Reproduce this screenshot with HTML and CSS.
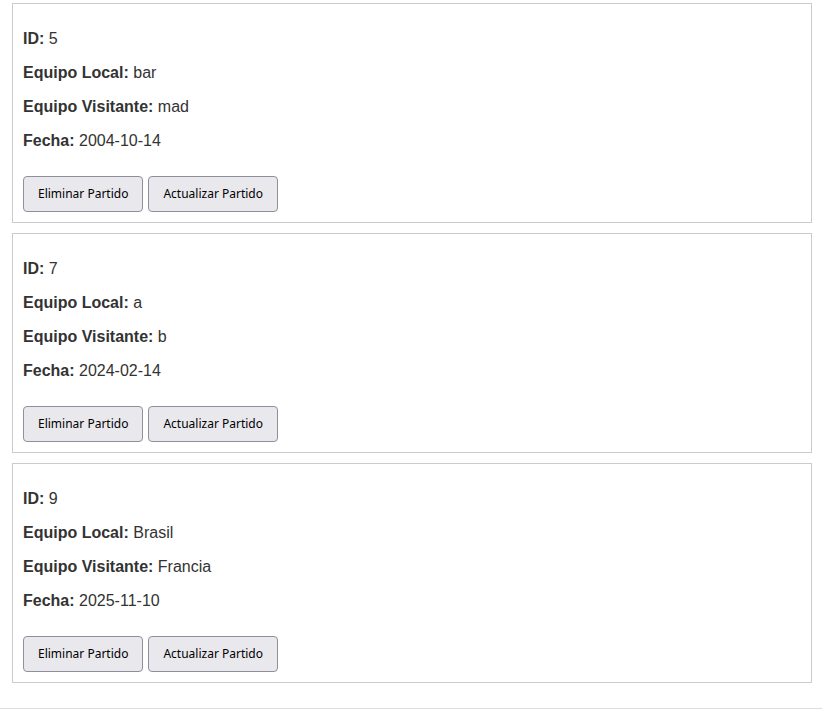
FILE: index.html
```html
<!DOCTYPE html>
<html lang="es">
<head>
<meta charset="utf-8">
<title>Partidos</title>
<link rel="stylesheet" href="styles.css">
</head>
<body>
<main class="list">
  <section class="card">
    <p><strong>ID:</strong> 5</p>
    <p><strong>Equipo Local:</strong> bar</p>
    <p><strong>Equipo Visitante:</strong> mad</p>
    <p><strong>Fecha:</strong> 2004-10-14</p>
    <div class="actions">
      <button class="btn">Eliminar Partido</button>
      <button class="btn">Actualizar Partido</button>
    </div>
  </section>
  <section class="card">
    <p><strong>ID:</strong> 7</p>
    <p><strong>Equipo Local:</strong> a</p>
    <p><strong>Equipo Visitante:</strong> b</p>
    <p><strong>Fecha:</strong> 2024-02-14</p>
    <div class="actions">
      <button class="btn">Eliminar Partido</button>
      <button class="btn">Actualizar Partido</button>
    </div>
  </section>
  <section class="card">
    <p><strong>ID:</strong> 9</p>
    <p><strong>Equipo Local:</strong> Brasil</p>
    <p><strong>Equipo Visitante:</strong> Francia</p>
    <p><strong>Fecha:</strong> 2025-11-10</p>
    <div class="actions">
      <button class="btn">Eliminar Partido</button>
      <button class="btn">Actualizar Partido</button>
    </div>
  </section>
</main>
<footer class="footer"></footer>
</body>
</html>
```
FILE: styles.css
```css
html, body {
  margin: 0;
  padding: 0;
  background: #ffffff;
}
body {
  font-family: "Liberation Sans", Arial, sans-serif;
  font-size: 16px;
  color: #333333;
}
.list {
  padding: 3px 10px 0 12px;
  display: flex;
  flex-direction: column;
  gap: 10px;
}
.card {
  border: 1px solid #cccccc;
  padding: 10px;
}
.card p {
  margin: 16px 0;
  line-height: 18px;
}
.actions {
  display: flex;
  gap: 5px;
  padding-top: 10px;
}
.btn {
  font-family: "Noto Sans", sans-serif;
  font-size: 12px;
  line-height: 18px;
  color: #000000;
  background: #e9e9ed;
  border: 1px solid #8f8f9d;
  border-radius: 4px;
  padding: 8px 14px;
  margin: 0;
}
.footer {
  margin-top: 25px;
  border-top: 1px solid #dddddd;
  height: 10px;
}
```
